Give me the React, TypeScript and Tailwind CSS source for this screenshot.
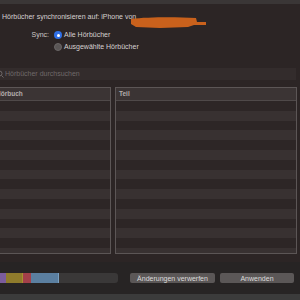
import React from 'react';

const rows = Array.from({ length: 17 }, (_, i) => i);

const Radio: React.FC<{ checked?: boolean }> = ({ checked }) =>
  checked ? (
    <span className="w-[8px] h-[8px] rounded-full bg-[#2f6fe6] flex items-center justify-center shrink-0">
      <span className="w-[3px] h-[3px] rounded-full bg-white" />
    </span>
  ) : (
    <span className="w-[8px] h-[8px] rounded-full bg-[#5a5656] border border-[#6a6666] shrink-0" />
  );

const Table: React.FC<{ title: string; className: string }> = ({ title, className }) => (
  <div className={`border border-[#5c5656] flex flex-col overflow-hidden ${className}`}>
    <div className="h-[13px] shrink-0 bg-[#3b3434] border-b border-[#4f4949] flex items-center px-[3px] text-[6.5px] font-bold text-[#b3adad]">
      {title}
    </div>
    <div className="flex-1 overflow-hidden">
      {rows.map((r) => (
        <div key={r} className={`h-[9.8px] ${r % 2 === 0 ? 'bg-[#2d2626]' : 'bg-[#383131]'}`} />
      ))}
    </div>
  </div>
);

export default function App() {
  return (
    <div
      className="w-[300px] h-[300px] overflow-hidden bg-[#2c2525] flex flex-col text-[7px] text-[#d6d1d1]"
      style={{ fontFamily: '"Liberation Sans", Arial, sans-serif' }}
    >
      <div className="h-[4px] shrink-0 bg-[#3a3636]" />

      {/* title */}
      <div className="h-[26px] shrink-0 flex items-center pl-[2px] relative">
        <span>Hörbücher synchronisieren auf: iPhone von</span>
        <svg className="absolute left-[130px] top-[9px]" width="80" height="16" viewBox="0 0 80 16">
          <path
            d="M1 6 C 18 4, 45 4, 66 5 L 67 9 L 76 9 L 76 12 L 64 12 L 58 14 L 30 15 L 6 14 L 1 11 Z"
            fill="#c9611c"
          />
        </svg>
      </div>

      {/* sync */}
      <div className="flex flex-col gap-[2px] shrink-0">
        <div className="h-[10px] flex items-center">
          <span className="w-[49px] text-right text-[#cfcaca]">Sync:</span>
          <span className="ml-[5px] flex items-center gap-[2px]">
            <Radio checked />
            <span>Alle Hörbücher</span>
          </span>
        </div>
        <div className="h-[10px] flex items-center">
          <span className="ml-[54px] flex items-center gap-[2px]">
            <Radio />
            <span>Ausgewählte Hörbücher</span>
          </span>
        </div>
      </div>

      {/* search */}
      <div className="mt-[16px] h-[12px] w-[296px] shrink-0 bg-[#332c2c] flex items-center relative">
        <svg className="absolute left-[-4px] top-[2px]" width="8" height="8" viewBox="0 0 8 8">
          <circle cx="3.5" cy="3.5" r="2.5" fill="none" stroke="#6f6969" strokeWidth="1" />
          <path d="M5.5 5.5 L7.5 7.5" stroke="#6f6969" strokeWidth="1" />
        </svg>
        <span className="ml-[5px] text-[#6f6969]">Hörbücher durchsuchen</span>
      </div>

      {/* tables */}
      <div className="mt-[7px] h-[167px] shrink-0 flex gap-[4px]">
        <Table title="Hörbuch" className="w-[119px] ml-[-8px]" />
        <Table title="Teil" className="w-[182px]" />
      </div>

      <div className="h-[8px] shrink-0" />

      {/* bottom bar */}
      <div className="h-[32px] shrink-0 bg-[#272424] flex items-center">
        <div className="w-[118px] h-[10px] flex rounded-r-[3px] overflow-hidden bg-[#3a3838]">
          <div className="w-[6px] bg-[#7b5c9c]" />
          <div className="w-[17px] bg-[#8f7b2c] border-r border-[#a89030]" />
          <div className="w-[8px] bg-[#a3404a]" />
          <div className="w-[28px] bg-[#5b7fa0] border-r border-[#7aa0c0]" />
        </div>
        <button className="ml-[12px] w-[85px] h-[10px] rounded-[2px] bg-[#5b5757] text-[#dcdcdc] text-[7px] leading-none">
          Änderungen verwerfen
        </button>
        <button className="ml-[5px] w-[74px] h-[10px] rounded-[2px] bg-[#5b5757] text-[#dcdcdc] text-[7px] leading-none">
          Anwenden
        </button>
      </div>
      <div className="flex-1 bg-[#3b3b3b]" />
    </div>
  );
}
